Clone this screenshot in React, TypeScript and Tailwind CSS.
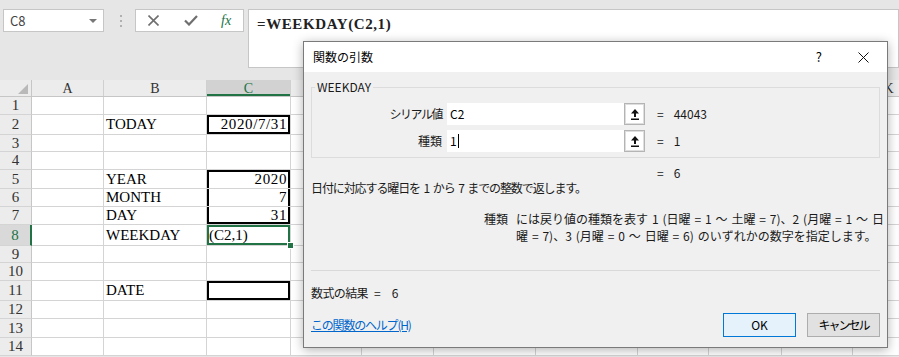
import React from "react";

const ui = "font-['Meiryo_UI','Noto_Sans_CJK_JP',sans-serif]";
const serif = "font-['Liberation_Serif','Noto_Serif_CJK_JP',serif]";

// columns D..J are behind the dialog, so their letters are left out
const columns = [
  { name: "A", w: "w-[72px]", show: true },
  { name: "B", w: "w-[103px]", show: true },
  { name: "C", w: "w-[84px]", show: true },
  { name: "D", w: "w-[71px]", show: false },
  { name: "E", w: "w-[72px]", show: false },
  { name: "F", w: "w-[102px]", show: false },
  { name: "G", w: "w-[102px]", show: false },
  { name: "H", w: "w-[71px]", show: false },
  { name: "I", w: "w-[73px]", show: false },
  { name: "J", w: "w-[71px]", show: false },
  { name: "K", w: "w-[72px]", show: true },
];

type Row = {
  n: number;
  h: string;
  b?: string;
  c?: string;
  cRight?: boolean;
  box?: string;
  selected?: boolean;
};

const rows: Row[] = [
  { n: 1, h: "h-[18px]" },
  { n: 2, h: "h-[20px]", b: "TODAY", c: "2020/7/31", cRight: true, box: "shadow-[inset_0_0_0_2px_#000]" },
  { n: 3, h: "h-[17px]" },
  { n: 4, h: "h-[18px]" },
  { n: 5, h: "h-[19px]", b: "YEAR", c: "2020", cRight: true, box: "shadow-[inset_2px_2px_0_#000,inset_-2px_0_0_#000]" },
  { n: 6, h: "h-[18px]", b: "MONTH", c: "7", cRight: true, box: "shadow-[inset_2px_0_0_#000,inset_-2px_0_0_#000]" },
  { n: 7, h: "h-[18px]", b: "DAY", c: "31", cRight: true, box: "shadow-[inset_2px_-2px_0_#000,inset_-2px_0_0_#000]" },
  { n: 8, h: "h-[21px]", b: "WEEKDAY", c: "(C2,1)", selected: true },
  { n: 9, h: "h-[17px]" },
  { n: 10, h: "h-[18px]" },
  { n: 11, h: "h-[20px]", b: "DATE", box: "shadow-[inset_0_0_0_2px_#000]" },
  { n: 12, h: "h-[18px]" },
  { n: 13, h: "h-[19px]" },
  { n: 14, h: "h-[18px]" },
];

function UploadIcon() {
  return (
    <svg width="8" height="11" viewBox="0 0 8 11">
      <path d="M4 0 L8 4.5 H5 V8 H3 V4.5 H0 Z" fill="#111" />
      <rect x="0" y="9.5" width="8" height="1.5" fill="#111" />
    </svg>
  );
}

function ArgRow({
  label,
  value,
  result,
  caret,
  labelClass = "",
}: {
  label: string;
  value: string;
  result: string;
  caret?: boolean;
  labelClass?: string;
}) {
  return (
    <div className="flex items-center h-[22px]">
      <div className={`w-[130px] text-right text-[12px] text-[#1a1a1a] ${labelClass}`}>{label}</div>
      <div className="ml-[5px] w-[177px] h-[22px] bg-white flex items-center pl-[3px] text-[12px] text-black">
        {value}
        {caret && <span className="ml-[1px] w-px h-[14px] bg-black" />}
      </div>
      <div className="w-[21px] h-[22px] bg-white border border-[#b4b4b4] shadow-[inset_0_0_0_1px_#dedede] flex items-center justify-center">
        <UploadIcon />
      </div>
      <div className="ml-[12px] text-[12px] text-[#1a1a1a]">=</div>
      <div className="ml-[10px] text-[12px] text-[#1a1a1a]">{result}</div>
    </div>
  );
}

function Dialog() {
  return (
    <div
      className={`absolute left-[303px] top-[41px] w-[585px] h-[307px] border border-[#7a7a7a] bg-[#f0f0f0] shadow-[0_2px_10px_rgba(0,0,0,0.3)] flex flex-col ${ui}`}
    >
      <div className="h-[30px] bg-white flex items-center pl-[9px] pr-[18px]">
        <span className="text-[12px] text-black">関数の引数</span>
        <span className="ml-auto text-[13px] text-black">?</span>
        <svg className="ml-[36px]" width="11" height="11" viewBox="0 0 11 11">
          <path d="M0.5 0.5 L10.5 10.5 M10.5 0.5 L0.5 10.5" stroke="#111" strokeWidth="1" />
        </svg>
      </div>
      <div className="flex flex-col px-[7px]">
        <fieldset className="mt-[8px] border border-[#dcdcdc] pb-[5px]">
          <legend className="ml-[3px] px-[2px] text-[12px] leading-[14px] text-[#1a1a1a]">WEEKDAY</legend>
          <div className="mt-[9px] flex flex-col gap-[5px]">
            <ArgRow label="シリアル値" value="C2" result="44043" labelClass="tracking-[-1.5px]" />
            <ArgRow label="種類" value="1" result="1" caret />
          </div>
        </fieldset>
        <div className="mt-[7px] h-[15px] leading-[15px] pl-[346px] text-[12px] text-[#1a1a1a] flex">
          <span>=</span>
          <span className="ml-[10px]">6</span>
        </div>
        <div className="h-[16px] leading-[16px] text-[12px] tracking-[-1.1px] [word-spacing:2px] text-[#1a1a1a] whitespace-nowrap">
          日付に対応する曜日を 1 から 7 までの整数で返します。
        </div>
        <div className="mt-[14px] flex pl-[173px] text-[12px] leading-[17px] text-[#1a1a1a] whitespace-nowrap">
          <span>種類</span>
          <span className="ml-[8px] whitespace-pre [word-spacing:1.2px]">
            {"には戻り値の種類を表す 1 (日曜 = 1 ～ 土曜 = 7)、2 (月曜 = 1 ～ 日"}
            <br />
            {"曜 = 7)、3 (月曜 = 0 ～ 日曜 = 6) のいずれかの数字を指定します。"}
          </span>
        </div>
        <div className="mt-[26px] h-px bg-[#d9d9d9]" />
        <div className="mt-[14px] h-[16px] leading-[16px] text-[12px] text-[#1a1a1a] whitespace-nowrap flex">
          <span className="tracking-[-0.6px]">数式の結果</span>
          <span className="ml-[6px]">=</span>
          <span className="ml-[11px]">6</span>
        </div>
        <div className="mt-[12px] flex items-center h-[24px]">
          <span className="text-[12px] tracking-[-1.2px] text-[#0066cc] underline">この関数のヘルプ(H)</span>
          <button className="ml-auto w-[73px] h-[24px] bg-[#e5f1fb] border border-[#0078d7] text-[12px] text-black">
            OK
          </button>
          <button className="ml-[11px] w-[73px] h-[24px] bg-[#e1e1e1] border border-[#adadad] text-[12px] tracking-[-2px] text-black">
            キャンセル
          </button>
        </div>
      </div>
    </div>
  );
}

function Toolbar() {
  return (
    <div className="h-[80px] flex items-start pt-[9px] pl-[3px]">
      <div className={`w-[101px] h-[23px] bg-white border border-[#c6c6c6] flex items-center pl-[6px] pr-[6px] ${ui}`}>
        <span className="text-[13px] text-[#444]">C8</span>
        <svg className="ml-auto" width="8" height="4" viewBox="0 0 8 4">
          <path d="M0 0 H8 L4 4 Z" fill="#777" />
        </svg>
      </div>
      <div className="ml-[15px] w-[3px] h-[23px] flex flex-col items-center justify-center gap-[3px]">
        <span className="w-[2px] h-[2px] bg-[#b0b0b0]" />
        <span className="w-[2px] h-[2px] bg-[#b0b0b0]" />
        <span className="w-[2px] h-[2px] bg-[#b0b0b0]" />
      </div>
      <div className="ml-[13px] w-[109px] h-[23px] bg-white border border-[#c6c6c6] flex items-center pl-[12px]">
        <svg width="11" height="11" viewBox="0 0 11 11">
          <path d="M0.5 0.5 L10.5 10.5 M10.5 0.5 L0.5 10.5" stroke="#6f6f6f" strokeWidth="1.6" />
        </svg>
        <svg className="ml-[25px]" width="14" height="11" viewBox="0 0 14 11">
          <path d="M1 5.5 L5 9.5 L13 1" fill="none" stroke="#6f6f6f" strokeWidth="2.2" />
        </svg>
        <span className={`ml-[23px] text-[14px] italic text-[#217346] ${serif}`}>fx</span>
      </div>
      <div className="ml-[4px] flex-1 h-[59px] bg-white border border-[#c6c6c6] pl-[8px] pt-[1px]">
        <span className={`text-[15px] font-bold tracking-[0.6px] text-[#222] ${serif}`}>=WEEKDAY(C2,1)</span>
      </div>
    </div>
  );
}

function Sheet() {
  return (
    <div className={`flex flex-col ${serif}`}>
      <div className="flex h-[17px] bg-[#ececec] border-b border-[#c6c6c6]">
        <div className="w-[32px] shrink-0 border-r border-[#c6c6c6] flex items-end justify-end pr-[3px] pb-[2px]">
          <svg width="10" height="10" viewBox="0 0 10 10">
            <path d="M10 0 V10 H0 Z" fill="#b9b9b9" />
          </svg>
        </div>
        {columns.map((c) => (
          <div
            key={c.name}
            className={`${c.w} shrink-0 border-r border-[#d0d0d0] flex items-center justify-center text-[14px] ${
              c.name === "C"
                ? "bg-[#d2d2d2] text-[#217346] shadow-[inset_0_-2px_0_#217346]"
                : "text-[#333]"
            }`}
          >
            {c.show ? c.name : null}
          </div>
        ))}
      </div>
      {rows.map((r) => (
        <div key={r.n} className={`flex ${r.h} bg-white`}>
          <div
            className={`w-[32px] shrink-0 border-b border-[#d4d4d4] flex items-center justify-center text-[15px] ${
              r.selected
                ? "bg-[#d9d9d9] text-[#217346] border-r-2 border-r-[#217346]"
                : "bg-[#ececec] text-[#333] border-r border-r-[#c6c6c6]"
            }`}
          >
            {r.n}
          </div>
          {columns.map((c) => {
            let content: React.ReactNode = null;
            let extra = "";
            if (c.name === "B") content = r.b;
            if (c.name === "C") {
              content = r.c;
              if (r.cRight) extra += " justify-end pr-[3px] tracking-[0.6px]";
              if (r.box) extra += " " + r.box;
              if (r.selected) extra += " relative z-10 shadow-[inset_0_0_0_2px_#217346]";
            }
            return (
              <div
                key={c.name}
                className={`${c.w} shrink-0 border-r border-b border-[#d4d4d4] flex items-center pl-[2px] text-[15px] text-black whitespace-nowrap ${extra}`}
              >
                {content}
                {c.name === "C" && r.selected && (
                  <span className="absolute right-[-4px] bottom-[-4px] w-[7px] h-[7px] bg-[#217346] border border-white" />
                )}
              </div>
            );
          })}
        </div>
      ))}
    </div>
  );
}

export default function App() {
  return (
    <div className="relative w-[899px] h-[357px] overflow-hidden bg-[#e6e6e6]">
      <Toolbar />
      <Sheet />
      <Dialog />
    </div>
  );
}
